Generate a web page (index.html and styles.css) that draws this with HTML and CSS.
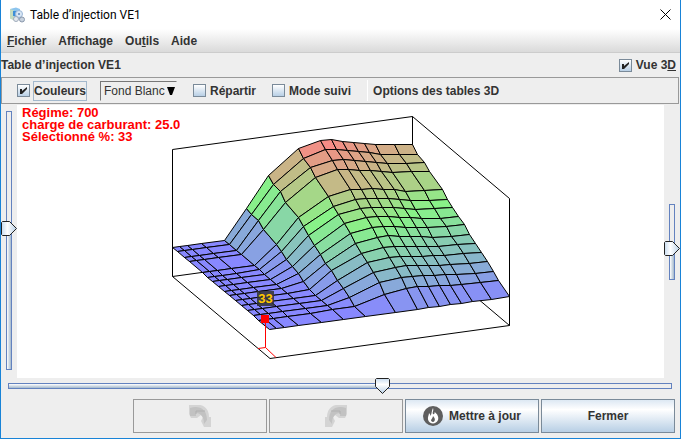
FILE: index.html
```html
<!DOCTYPE html>
<html lang="fr">
<head>
<meta charset="utf-8">
<title>Table d’injection VE1</title>
<link rel="stylesheet" href="styles.css">
</head>
<body>
<div class="window">
  <header class="titlebar">
    <svg class="app-icon" viewBox="0 0 16 16" aria-hidden="true">
      <path d="M1 2l6-1.500 4 1.500v10l-6 1-4-2z" fill="#8cc4ee"/>
      <path d="M1 2l4 1.500v10l-4-2z" fill="#c4dcc0"/>
      <path d="M4 4h4v5H4z" fill="#3d8fd8"/>
      <circle cx="10" cy="7" r="3.500" fill="#d8e6f4" stroke="#9cb8d8"/>
      <circle cx="7" cy="12" r="2.500" fill="#e4e8ee" stroke="#a0acbc"/>
      <circle cx="13" cy="12.500" r="2.500" fill="#c8d2de" stroke="#8a98ac"/>
      <circle cx="10" cy="7" r="1" fill="#5c86b8"/>
    </svg>
    <h1 class="titlebar-text">Table d’injection VE1</h1>
    <button class="close" aria-label="Quitter"><svg viewBox="0 0 11 11"><path d="M.5.5l10 10M10.500.5l-10 10" fill="none" stroke="#000"/></svg></button>
  </header>

  <nav class="menubar">
    <button><u>F</u>ichier</button>
    <button>Affichage</button>
    <button>Ou<u>t</u>ils</button>
    <button>Aide</button>
  </nav>

  <div class="heading">
    <h2>Table d’injection VE1</h2>
    <label class="check"><input type="checkbox" checked><span>Vue 3<u>D</u></span></label>
  </div>

  <div class="toolbar">
    <label class="check focused"><input type="checkbox" checked><span>Couleurs</span></label>
    <select class="background-select" aria-label="Fond"><option>Fond Blanc</option></select>
    <label class="check"><input type="checkbox"><span>Répartir</span></label>
    <label class="check"><input type="checkbox"><span>Mode suivi</span></label>
    <button class="options">Options des tables 3D</button>
  </div>

  <main class="view">
    <div class="side side-left"><input class="slider vertical left" type="range" min="0" max="100" value="55" aria-label="Inclinaison"></div>
    <div class="canvas">
      <svg class="plot" viewBox="17 105 647 273" role="img" aria-label="Surface 3D">
        <g class="box">
          <path d="M172.500 276.500V149.500L412.500 116.500V243.500zM412.500 116.500L509.500 198.500V325.500L412.500 243.500M172.500 276.500L270 358.500L509.500 325.500"/>
        </g>
        <g class="mesh" id="mesh"></g>
        <g class="marker">
          <path d="M265.500 319V347.500M258 348.500L265.500 347.500L276 357.500"/>
          <rect class="point" x="261" y="315" width="8" height="8"/>
          <rect class="tag" x="257" y="291" width="17" height="15"/>
          <text x="265.500" y="303" text-anchor="middle">33</text>
        </g>
      </svg>
      <p class="readout">Régime: 700<br>charge de carburant: 25.0<br>Sélectionné %: 33</p>
    </div>
    <div class="side side-right"><input class="slider vertical right" type="range" min="0" max="100" value="38" aria-label="Zoom"></div>
  </main>

  <div class="rotation"><input class="slider horizontal" type="range" min="0" max="1000" value="566" aria-label="Rotation"></div>

  <footer class="actions">
    <button disabled aria-label="Annuler">
      <svg class="arrow" viewBox="0 0 22 22"><path d="M0 0h11c6 1 9 6 9 12h2v10h-7l-3-6 2-4-2-2-4 3H2l-2-4z" fill="#d4d4d4"/><path d="M1 3c9-3 17 1 17 12l-3 4c0-7-3-11-8-11v3H1z" fill="#c2c2c2"/><path d="M7 9V6h9" fill="none" stroke="#b0b0b0"/></svg>
    </button>
    <button disabled aria-label="Rétablir">
      <svg class="arrow flip" viewBox="0 0 22 22"><path d="M0 0h11c6 1 9 6 9 12h2v10h-7l-3-6 2-4-2-2-4 3H2l-2-4z" fill="#d4d4d4"/><path d="M1 3c9-3 17 1 17 12l-3 4c0-7-3-11-8-11v3H1z" fill="#c2c2c2"/><path d="M7 9V6h9" fill="none" stroke="#b0b0b0"/></svg>
    </button>
    <button>
      <svg class="flame" viewBox="0 0 20 20" aria-hidden="true"><circle cx="10" cy="10" r="10" fill="#5e5e5e"/><path d="M10 2c1 3-1 4 0 6 1 1 2-1 1.500-2 3 2 4.500 5 3.500 8-1 2-3 3.500-5 3.500S5.500 16 5 13.500C4.500 11 6 9 6 7c1 1 1.500 2 1.500 3C9 7.500 8.500 4.500 10 2z" fill="#fff"/><path d="M10 10c1.500 2 2.500 3 1.500 5-1 1.500-3 1-3.500-.5C8 13 10 12 10 10z" fill="#5e5e5e"/></svg>
      Mettre à jour
    </button>
    <button>Fermer</button>
  </footer>
</div>
<script src="mesh.js"></script>
</body>
</html>
```
FILE: styles.css
```css
* { box-sizing: border-box; }

body {
  margin: 0;
  font: bold 12px/16px "Liberation Sans", Arial, sans-serif;
  color: #333;
  background: #eee;
}

button, select, input { font: inherit; color: inherit; margin: 0; }
button { border: 0; padding: 0; background: none; }
h1, h2, p { margin: 0; font-size: 12px; }

.window {
  display: flex;
  flex-direction: column;
  height: 100vh;
  border: 1px solid #1883d7;
  border-top: 0;
}

.titlebar {
  display: flex;
  flex: none;
  align-items: center;
  gap: 5px;
  height: 29px;
  padding: 0 9px 0 8px;
  background: #fff;
}
.app-icon { width: 16px; height: 16px; }
.titlebar-text { flex: 1; font: 12px/16px Roboto, sans-serif; color: #000; }
.close svg { display: block; width: 11px; height: 11px; }

.menubar {
  display: flex;
  flex: none;
  gap: 12px;
  height: 24px;
  padding: 0 6px;
  background: linear-gradient(#fff, #dadada);
  border-bottom: 1px solid #ccc;
}

.heading {
  display: flex;
  flex: none;
  align-items: center;
  justify-content: space-between;
  height: 24px;
  padding-right: 4px;
}

.check { display: flex; align-items: center; gap: 4px; }
.check span { line-height: 18px; }
.check input {
  appearance: none;
  width: 13px;
  height: 13px;
  border: 1px solid #7a8a99;
  background: linear-gradient(#fff, #b8cfe5);
}
.check input:checked {
  background:
    url("data:image/svg+xml,%3Csvg xmlns='http://www.w3.org/2000/svg' viewBox='0 0 11 11'%3E%3Cpath d='M2 4h2v2l5-4v2L4 9H2z' fill='%23222'/%3E%3C/svg%3E"),
    linear-gradient(#fff, #b8cfe5);
}
.focused span { outline: 1px solid #a3b8cc; }

.toolbar {
  display: flex;
  flex: none;
  align-items: center;
  gap: 16px;
  height: 27px;
  margin-right: 1px;
  padding: 0 15px;
  border: 1px solid #999;
}
.background-select {
  appearance: none;
  width: 77px;
  height: 20px;
  margin-left: -2px;
  padding: 0 3px;
  border: 1px solid #eee;
  border-top-color: #777;
  border-left-color: #777;
  border-radius: 0;
  font-weight: normal;
  background: url("data:image/svg+xml,%3Csvg xmlns='http://www.w3.org/2000/svg' viewBox='0 0 8 8'%3E%3Cpath d='M0 0h8L5 8H3z'/%3E%3C/svg%3E") no-repeat right 1px center / 8px 8px #eee;
}
.options { height: 21px; padding-left: 5px; border-left: 1px solid #fff; }

.view { display: flex; flex: 1; min-height: 0; margin-top: 1px; }
.side { display: flex; width: 16px; min-height: 0; }
.side-left { padding: 6px 0 8px; }
.side-right { align-items: center; }
.canvas { position: relative; flex: 1; background: #fff; }
.plot { display: block; width: 100%; height: 100%; }
.readout {
  position: absolute;
  top: 2px;
  left: 5px;
  font-size: 13px;
  line-height: 12px;
  color: #f00;
}

.box path { fill: none; stroke: #000; }
.mesh polygon { stroke: #000; stroke-linejoin: round; }
.marker path { fill: none; stroke: #f00; }
.point { fill: #f00; }
.tag { fill: #333; fill-opacity: .85; }
.marker text { font: bold 13px "Liberation Sans", Arial, sans-serif; fill: #ffc800; }

.slider { appearance: none; display: block; background: none; }
.slider::-webkit-slider-runnable-track { border: 1px solid #6382bf; }
.slider::-webkit-slider-thumb { appearance: none; border: 0; }

.horizontal { width: 100%; height: 16px; }
.horizontal::-webkit-slider-runnable-track {
  height: 6px;
  background: linear-gradient(90deg, transparent 56%, #eee 56%), linear-gradient(#fff, #a3b8cc);
}
.horizontal::-webkit-slider-thumb {
  width: 15px;
  height: 16px;
  margin-top: -6px;
  background: url("data:image/svg+xml,%3Csvg xmlns='http://www.w3.org/2000/svg' viewBox='0 0 15 16'%3E%3ClinearGradient id='g' x2='0' y2='1'%3E%3Cstop stop-color='%23c8dcf0'/%3E%3Cstop offset='.4' stop-color='%23fff'/%3E%3Cstop offset='1' stop-color='%23b8cfe5'/%3E%3C/linearGradient%3E%3Cpath d='M1.500 .5h12l1 1v7l-7 7-7-7v-7z' fill='url(%23g)' stroke='%23222'/%3E%3C/svg%3E");
}

.vertical { writing-mode: vertical-lr; direction: rtl; width: 16px; }
.vertical::-webkit-slider-runnable-track { width: 6px; }
.vertical::-webkit-slider-thumb {
  width: 16px;
  height: 15px;
  margin-left: -6px;
  background: url("data:image/svg+xml,%3Csvg xmlns='http://www.w3.org/2000/svg' viewBox='0 0 16 15'%3E%3ClinearGradient id='g'%3E%3Cstop stop-color='%23c8dcf0'/%3E%3Cstop offset='.4' stop-color='%23fff'/%3E%3Cstop offset='1' stop-color='%23b8cfe5'/%3E%3C/linearGradient%3E%3Cpath d='M.5 1.500v12l1 1h7l7-7-7-7h-7z' fill='url(%23g)' stroke='%23222'/%3E%3C/svg%3E");
}
.left { height: 100%; }
.right { height: 76px; }
.left::-webkit-slider-runnable-track { background: linear-gradient(#eee 45%, transparent 45%), linear-gradient(90deg, #fff, #a3b8cc); }
.right::-webkit-slider-runnable-track { background: linear-gradient(#eee 60%, transparent 60%), linear-gradient(90deg, #fff, #a3b8cc); }

.rotation { flex: none; padding: 0 8px 0 7px; }

.actions {
  display: grid;
  flex: none;
  grid-template-columns: repeat(4, 134px);
  justify-content: end;
  gap: 2px;
  padding: 5px;
}
.actions button {
  display: flex;
  align-items: center;
  justify-content: center;
  gap: 6px;
  height: 34px;
  border: 1px solid #7a8a99;
  background: linear-gradient(#dde8f3, #fff 30%, #b8cfe5);
}
.actions button:disabled { border-color: #999; background: #eee; }
.arrow { width: 22px; height: 22px; }
.flip { transform: scaleX(-1); }
.flame { width: 20px; height: 20px; }
```
FILE: mesh.js
```js
// Offsets of the grid lines along the two floor axes.
const cols = [0, 7, 15, 29, 52, 74, 96, 126, 148, 159, 170, 181, 192, 203, 222, 240];
const rows = [0, 5, 12, 17, 30, 35, 40, 46, 52, 57, 63, 69, 75, 81, 86, 97];

// Surface position of each row from column 5 on; the columns before lie at idle level.
const surface = [
  [208, 175, 148, 140, 139, 141, 142, 143, 144, 144, 144],
  [214, 184, 158, 149, 149, 150, 151, 152, 154, 154, 154],
  [220, 191, 167, 160, 159, 160, 161, 162, 163, 163, 162],
  [229, 202, 177, 169, 169, 170, 170, 171, 172, 171, 171],
  [244, 217, 196, 189, 189, 188, 189, 189, 191, 190, 189],
  [251, 226, 206, 199, 198, 198, 198, 199, 200, 200, 199],
  [259, 235, 214, 208, 207, 207, 207, 208, 209, 208, 207],
  [266, 245, 223, 217, 216, 216, 217, 217, 218, 218, 216],
  [273, 254, 233, 227, 226, 226, 227, 227, 227, 226, 224],
  [281, 263, 243, 237, 235, 236, 236, 236, 237, 236, 234],
  [289, 270, 253, 247, 246, 246, 246, 246, 246, 244, 243],
  [295, 280, 262, 257, 256, 256, 256, 255, 255, 253, 252],
  [300, 288, 272, 267, 265, 265, 265, 265, 264, 263, 261],
  [305, 297, 282, 277, 276, 275, 275, 274, 274, 273, 271],
  [309, 306, 294, 288, 286, 286, 285, 285, 284, 282, 280],
  [319, 316, 312, 309, 307, 306, 304, 303, 301, 299, 296]
];

const idle = 29;
const peak = 115;
const floorY = (r, c) => 276 - cols[c] * 0.1375 + rows[r] * 0.845;

function vertex(r, c) {
  const floor = floorY(r, c);
  const y = c < 5 ? floor - idle : surface[r][c - 5];
  return { x: 172.5 + cols[c] + rows[r], y: Math.round(y) + 0.5, h: floor - y };
}

function shade(height) {
  const t = Math.min(1, Math.max(0, (height - idle) / (peak - idle))) * 2;
  const low = [136, 136, 255], mid = [136, 242, 136], high = [252, 134, 134];
  const [from, to, k] = t < 1 ? [low, mid, t] : [mid, high, t - 1];
  return `rgb(${from.map((v, i) => Math.round(v + (to[i] - v) * k)).join(",")})`;
}

const mesh = document.getElementById("mesh");
for (let r = 0; r < 15; r++) {
  for (let c = 0; c < 15; c++) {
    const cell = [vertex(r, c), vertex(r, c + 1), vertex(r + 1, c + 1), vertex(r + 1, c)];
    const polygon = document.createElementNS("http://www.w3.org/2000/svg", "polygon");
    polygon.setAttribute("points", cell.map(p => `${p.x},${p.y}`).join(" "));
    polygon.setAttribute("fill", shade(cell.reduce((sum, p) => sum + p.h, 0) / 4));
    mesh.append(polygon);
  }
}
```
